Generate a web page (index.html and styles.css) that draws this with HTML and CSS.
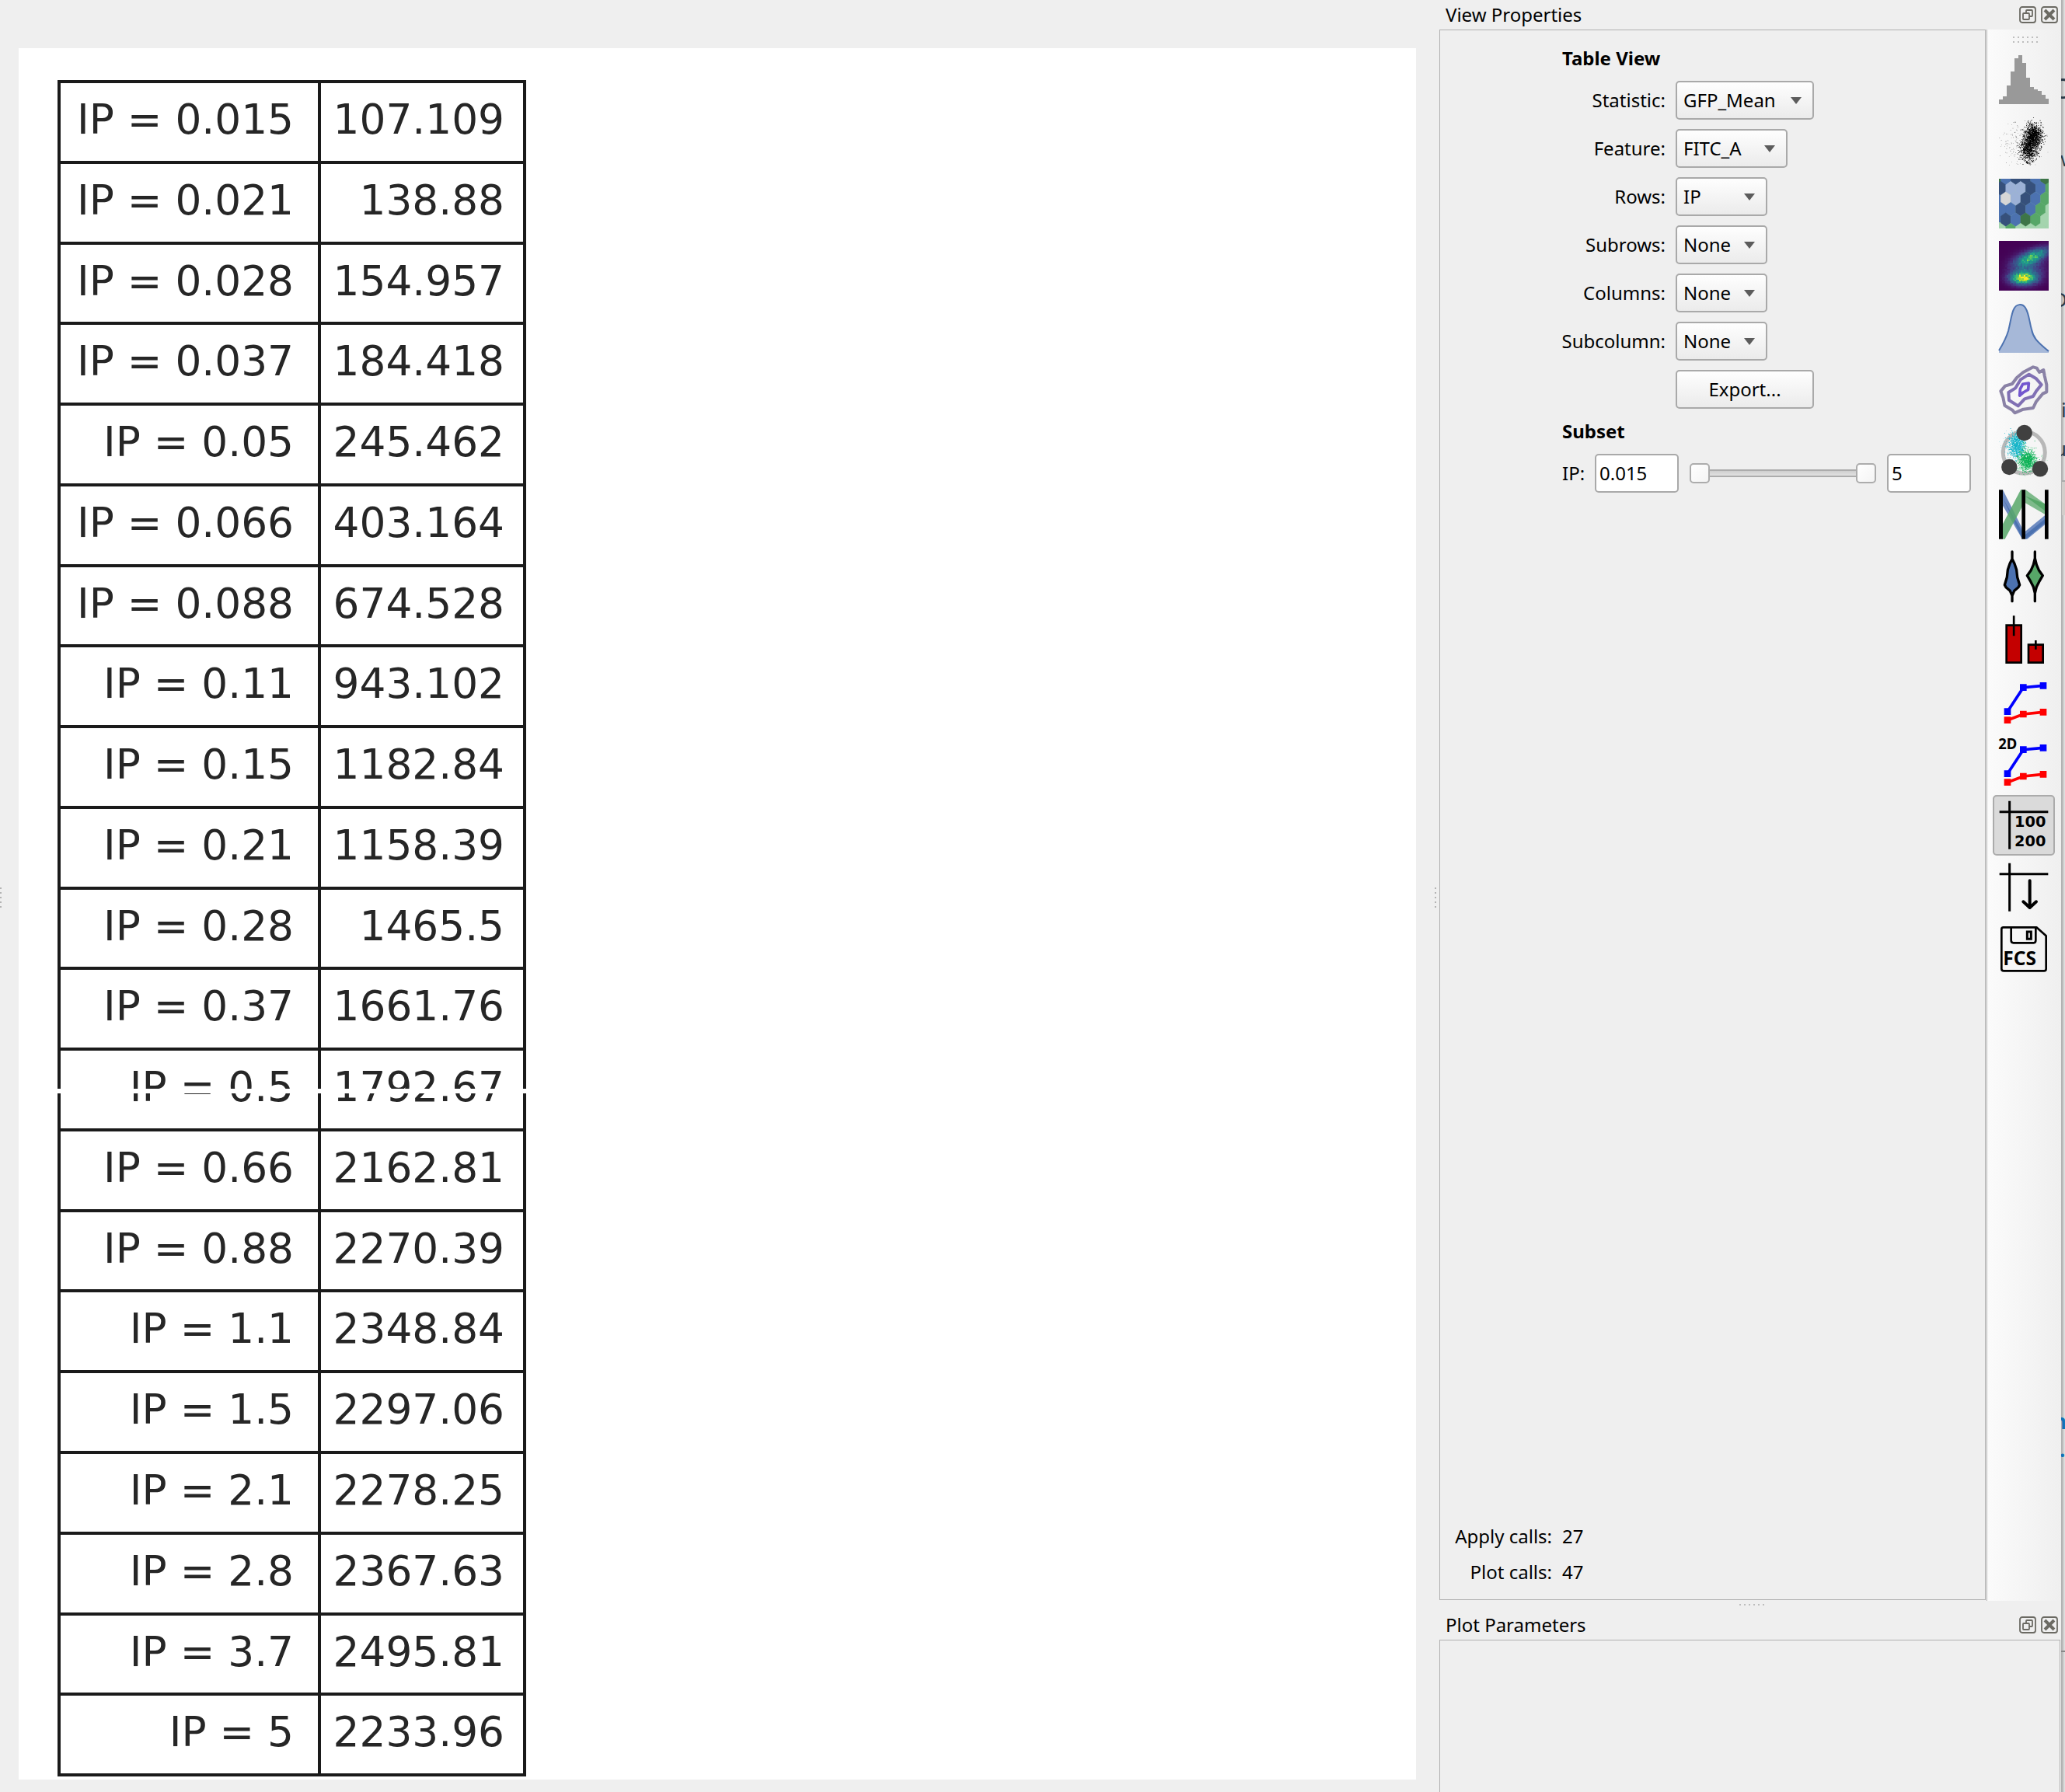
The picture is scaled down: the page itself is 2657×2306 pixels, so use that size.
FILE: index.html
```
<!DOCTYPE html>
<html lang="en">
<head>
  <meta charset="UTF-8">
  <title>Table View</title>
  <link rel="stylesheet" href="styles.css">
</head>
<body>
  <div class="window">
    <main class="plot-area">
      <div class="grip grip-left"></div>
      <div class="canvas">
        <div class="stats" id="stats"></div>
        <div class="seam"></div>
      </div>
      <div class="grip grip-right"></div>
    </main>

    <aside class="docks">
      <div class="dock-title">
        <span>View Properties</span>
        <svg class="dock-buttons" viewBox="0 0 28 22"><use href="#dockButtons"/></svg>
      </div>

      <div class="view-dock">
        <section class="properties">
          <h3>Table View</h3>
          <div class="form">
            <label>Statistic:</label><button class="combo wide">GFP_Mean</button>
            <label>Feature:</label><button class="combo medium">FITC_A</button>
            <label>Rows:</label><button class="combo">IP</button>
            <label>Subrows:</label><button class="combo">None</button>
            <label>Columns:</label><button class="combo">None</button>
            <label>Subcolumn:</label><button class="combo">None</button>
            <span></span><button class="export">Export...</button>
          </div>
          <h3 class="subset">Subset</h3>
          <div class="range">
            <label>IP:</label>
            <input type="text" value="0.015">
            <div class="slider"><i class="handle"></i><i class="groove"></i><i class="handle"></i></div>
            <input type="text" value="5">
          </div>
          <div class="calls">
            <span>Apply calls:</span><span>27</span>
            <span>Plot calls:</span><span>47</span>
          </div>
        </section>

        <nav class="toolbar">
          <div class="dots"></div>
          <!-- histogram -->
          <svg viewBox="0 0 64 64"><path fill="#999" d="M0 64V58H5V54H10V40H15V22H20V5H25V1H30V11H35V30H40V42H45V45H50V47H55V52H60V57H64V64Z"/></svg>
          <!-- scatter -->
          <svg viewBox="0 0 64 64" id="scatter"></svg>
          <!-- hexbin -->
          <svg viewBox="0 0 64 64" id="hexbin"></svg>
          <!-- density -->
          <svg viewBox="0 0 64 64" id="density" shape-rendering="crispEdges"></svg>
          <!-- kde -->
          <svg viewBox="0 0 64 64">
            <path fill="#a6b8d8" d="M0 64V61C5 53 9 46 12 36C15 24 16 14 19 8C22 1 30 0 34 6C39 14 39 24 42 34C44 44 48 49 64 62V64Z"/>
            <path fill="none" stroke="#4c72b0" stroke-width="2" d="M0 61C5 53 9 46 12 36C15 24 16 14 19 8C22 1 30 0 34 6C39 14 39 24 42 34C44 44 48 49 64 62"/>
          </svg>
          <!-- contours -->
          <svg viewBox="96 270 192 192" fill="none" stroke-linejoin="round">
            <path stroke="#8a82a6" stroke-width="12" d="M103 370L120 350L147 342L165 318L190 297L228 277L242 281L252 297L268 288L272 310L280 345V373L265 380L240 410L228 435L190 440L157 454L148 443L118 425L112 395Z"/>
            <path stroke="#8070b4" stroke-width="12" d="M133 375L160 358L180 325L212 305L240 322L260 345L240 370L228 390L195 400L170 427L135 405Z"/>
            <path stroke="#7357cf" stroke-width="11" d="M176 387L178 362L188 343L211 339L209 364L190 375Z"/>
          </svg>
          <!-- radviz -->
          <svg viewBox="0 0 64 64">
            <circle cx="32.3" cy="32.3" r="27" fill="#f6f6f6" stroke="#b8b8b8" stroke-width="5"/>
            <g id="radviz"></g>
            <g fill="#404040"><circle cx="32.7" cy="7" r="10.2"/><circle cx="13.3" cy="51" r="10.2"/><circle cx="53" cy="53.3" r="10.2"/></g>
          </svg>
          <!-- parallel coordinates -->
          <svg viewBox="96 750 192 192">
            <path fill="#6f8cc2" d="M111 751L186 900V941L111 812Z"/>
            <path fill="#4c72b0" d="M111 783L186 912V941L180 928Z"/>
            <path fill="#6f8cc2" d="M197 912L273 850V886L205 941H197Z"/>
            <path fill="#4c72b0" d="M197 925L273 864V880L200 941Z"/>
            <path fill="#57a768" fill-opacity=".85" d="M111 883L180 751H190V808L119 941H111Z"/>
            <path fill="#57a768" fill-opacity=".75" d="M190 751H199L273 805V845L190 797Z"/>
            <path fill="#57a768" d="M197 775L273 805V832Z"/>
            <path d="M96 751h15v190H96zM184 751h14v190h-14zM273 751h14v190h-14z"/>
          </svg>
          <!-- violin -->
          <svg viewBox="96 30 192 192" stroke="#000" stroke-width="10" stroke-linejoin="round">
            <path fill="#4c72b0" d="M147 30V58L138 76L130 100L127 128L118 158L123 167L139 181L147 200V221V200L155 181L171 167L176 158L167 128L164 100L156 76L147 58Z"/>
            <path fill="#57a768" d="M235 30V55L229 80L220 101L205 122L219 146L229 166L235 190V221V190L241 166L251 146L265 122L250 101L241 80L235 55Z"/>
          </svg>
          <!-- bars -->
          <svg viewBox="96 270 192 192" fill="#c40000" stroke="#000" stroke-width="8">
            <path d="M125 314h57v144h-57zM210 389h56v69h-56zM153.500 277v78M238 372v35"/>
          </svg>
          <!-- 1d statistics -->
          <svg viewBox="96 510 192 192"><g id="lines">
            <path fill="none" stroke="#00f" stroke-width="11" d="M129 647L190 554L266 547"/>
            <path fill="none" stroke="#f00" stroke-width="11" d="M129 680L190 657L266 649"/>
            <path fill="#00f" d="M116 634h26v26h-26zM177 541h26v26h-26zM254 534h26v26h-26z"/>
            <path fill="#f00" d="M116 667h26v26h-26zM177 644h26v26h-26zM254 636h26v26h-26z"/>
          </g></svg>
          <!-- 2d statistics -->
          <svg viewBox="96 510 192 192"><use href="#lines"/><text x="94" y="552" font-family="Noto Sans" font-weight="bold" font-size="56" textLength="72" lengthAdjust="spacingAndGlyphs">2D</text></svg>
          <!-- table -->
          <button class="tool selected"><svg viewBox="96 60 192 192">
            <path stroke="#000" stroke-width="9" d="M137 62V248M98 104H286"/>
            <g font-family="DejaVu Sans" font-weight="bold" font-size="58"><text x="156" y="163">100</text><text x="156" y="236">200</text></g>
          </svg></button>
          <!-- export table -->
          <svg viewBox="96 300 192 192">
            <path stroke="#000" stroke-width="9" d="M137 302V488M98 344H286"/>
            <path fill="none" stroke="#000" stroke-width="12" stroke-linecap="round" stroke-linejoin="round" d="M215 370V474M190 451L215 474L240 451"/>
          </svg>
          <!-- export fcs -->
          <svg viewBox="96 540 192 192">
            <path fill="none" stroke="#000" stroke-width="8" stroke-linejoin="round" d="M113 550H241L278 583V710Q278 718 270 718H115Q106 718 106 710V557Q106 550 113 550ZM143 550V600Q143 610 152 610H230Q238 610 238 600V550"/>
            <path fill="none" stroke="#000" stroke-width="9" d="M205 567h15v28h-15z"/>
            <text x="112" y="696" font-family="Noto Sans" font-weight="bold" font-size="73" textLength="128" lengthAdjust="spacingAndGlyphs">FCS</text>
          </svg>
        </nav>
      </div>

      <div class="splitter"><div class="grip-row"></div></div>

      <div class="dock-title">
        <span>Plot Parameters</span>
        <svg class="dock-buttons" viewBox="0 0 28 22"><use href="#dockButtons"/></svg>
      </div>
      <div class="parameters"></div>
    </aside>

    <!-- window behind this one -->
    <div class="behind">
      <div class="edge"></div>
      <b style="top: 98px; left: -12px; font-size: 36px">O</b>
      <b style="top: 188px; left: -10px">w</b>
      <b style="top: 369px; left: -11px">D</b>
      <b style="top: 511px">i</b>
      <b style="top: 561px; left: -9px">u</b>
      <div class="shade"></div>
      <b class="link" style="top: 1813px">n</b>
      <b class="link" style="top: 1849px; left: -2px">.</b>
      <div class="line"></div>
    </div>
  </div>

  <svg class="defs">
    <g id="dockButtons" fill="none" stroke="#6b6a63" stroke-width="1.800">
      <rect x="1" y="1" width="20" height="20" rx="3"/>
      <rect x="5" y="9" width="8" height="8" rx="1"/>
      <path d="M9 9V6Q9 5 10 5H16Q17 5 17 6V12Q17 13 16 13H13"/>
      <g transform="translate(28 0)">
        <rect x="1" y="1" width="20" height="20" rx="3"/>
        <path stroke-width="4" d="M5 5L17 17M17 5L5 17"/>
      </g>
    </g>
  </svg>
  <script src="script.js"></script>
</body>
</html>
```

FILE: styles.css
```
body {
  margin: 0;
  font-family: "Noto Sans", sans-serif;
  font-size: 24px;
  line-height: 32px;
  color: #000;
  background-color: #efefef;
}

.window {
  display: flex;
  width: 2657px;
  height: 2306px;
  overflow: hidden;
}

/* plot */
.plot-area {
  display: flex;
  box-sizing: border-box;
  width: 1852px;
  padding: 62px 0 16px;
}

.canvas {
  position: relative;
  box-sizing: border-box;
  width: 1798px;
  padding: 41px 0 0 50px;
  background: #fff;
}

.grip {
  box-sizing: border-box;
  height: 32px;
  margin-top: 1078px;
  width: 24px;
  background: radial-gradient(circle, #b4b4b4 1px, transparent 1.5px) 0 0 / 6px 6px;
}

.grip-left { width: 3px; margin-right: 21px; background-position: -2px 0; }
.grip-right { width: 6px; margin-left: 22px; }

.stats {
  display: flex;
  flex-direction: column;
  box-sizing: border-box;
  width: 603px;
  height: 2183px;
  border: solid #1a1a1a;
  border-width: 0 4px 4px 0;
  font-family: "DejaVu Sans", sans-serif;
  font-size: 53.3px;
  line-height: 94px;
  color: #262626;
}

.row {
  display: flex;
  flex: 1;
  border-top: 4px solid #1a1a1a;
  text-align: right;
}

.row div {
  box-sizing: border-box;
  border-left: 4px solid #1a1a1a;
}

.name { width: 335px; padding-right: 31px; }
.value { width: 264px; padding-right: 24px; }

.seam {
  position: absolute;
  left: 0;
  right: 0;
  top: 1339px;
  height: 6px;
  background: #fff;
}

/* docks */
.docks {
  width: 800px;
  display: flex;
  flex-direction: column;
}

.dock-title {
  display: flex;
  justify-content: space-between;
  box-sizing: border-box;
  height: 38px;
  padding: 3px 4px 0 8px;
}

.dock-buttons {
  width: 28px;
  height: 22px;
  margin: 5px 22px 0 0;
  overflow: visible;
}

.view-dock {
  display: flex;
  height: 2022px;
}

.properties {
  display: flex;
  flex-direction: column;
  box-sizing: border-box;
  width: 703px;
  height: 2021px;
  padding: 20px 18px 12px 19px;
  border: 1px solid #b0b0b0;
}

h3 {
  margin: 0 0 13px 138px;
  font-size: inherit;
  line-height: 32px;
  font-weight: bold;
}

.form {
  display: grid;
  grid-template-columns: 271px 1fr;
  gap: 12px 13px;
  justify-items: start;
  line-height: 50px;
}

.form label {
  justify-self: end;
}

button, input {
  box-sizing: border-box;
  height: 50px;
  border: 2px solid #a9a9a9;
  border-radius: 5px;
  font: inherit;
  color: #000;
}

.combo, .export {
  width: 118px;
  padding: 0 0 0 8px;
  background: linear-gradient(#fefefe, #ebebeb);
  line-height: 46px;
  text-align: left;
}

.combo {
  display: flex;
  align-items: center;
  justify-content: space-between;
  padding-right: 14px;
}

.combo::after {
  content: "";
  border: solid transparent;
  border-width: 9px 7.5px 0;
  border-top-color: #5c5c5c;
}

.wide, .export { width: 178px; }
.medium { width: 144px; }
.export { padding: 0; text-align: center; }

.subset { margin: 13px 0 13px 138px; }

.range {
  display: flex;
  align-items: center;
  margin-left: 138px;
}

.range label { width: 42px; }

input {
  width: 108px;
  padding: 0 4px 1px;
  background: #fff;
}

.slider {
  display: flex;
  align-items: center;
  width: 240px;
  margin: 0 14px;
}

.handle {
  box-sizing: border-box;
  width: 26px;
  height: 26px;
  border: 2px solid #acacac;
  border-radius: 5px;
  background: linear-gradient(135deg, #fff, #f4f4f4);
}

.groove {
  flex: 1;
  box-sizing: border-box;
  height: 10px;
  border: solid #acacac;
  border-width: 2px 0;
  background: linear-gradient(#cecece, #e2e2e2);
}

.calls {
  display: grid;
  grid-template-columns: 125px auto;
  column-gap: 13px;
  line-height: 46px;
  margin-top: auto;
  justify-content: start;
}

.calls span:nth-child(odd) { text-align: right; }

/* toolbar */
.toolbar {
  display: flex;
  flex-direction: column;
  box-sizing: border-box;
  width: 97px;
  margin-left: 1px;
  padding-left: 15px;
  gap: 16px;
  border-left: 1px solid #b4b4b4;
  background: linear-gradient(to right, #fbfbfb, #efefef);
}

.toolbar svg {
  display: block;
  flex: none;
  width: 64px;
  height: 64px;
  overflow: visible;
}

.dots {
  width: 36px;
  height: 12px;
  margin: 8px 0 -4px 16px;
  background: #bebebe;
  mask: conic-gradient(from 270deg at 2px 2px, #000 90deg, transparent 0) 2px 1px / 6px 6px;
}

.tool.selected {
  width: 80px;
  height: 78px;
  margin: -7px 0 -7px -8px;
  padding: 0 0 0 6px;
  background: #dadada;
  border-color: #ababab;
}

.splitter {
  box-sizing: border-box;
  height: 16px;
  padding: 4px 0 0 386px;
}

.grip-row {
  width: 34px;
  height: 2px;
  background: repeating-linear-gradient(to right, #bdbdbd 0 2px, transparent 2px 6px);
}

.splitter + .dock-title { height: 34px; padding-top: 0; }
.splitter + .dock-title span { margin-top: -1px; }
.splitter + .dock-title .dock-buttons { margin-top: 4px; }

.parameters {
  flex: 1;
  width: 797px;
  border: solid #b0b0b0;
  border-width: 1px 1px 0;
}

/* strip of the window behind */
.behind {
  position: relative;
  width: 5px;
  overflow: hidden;
  background: #e5e5e5;
}

.behind b {
  position: absolute;
  left: 0;
  font-size: 26px;
  font-weight: normal;
  color: #2b3a48;
}

.behind .link { color: #1272b6; left: -10px; font-weight: bold; }

.edge {
  height: 100%;
  background: linear-gradient(to right, #b2b2b2 1px, #bcbcbc 2px, #dedede 4px);
}

.shade {
  position: absolute;
  top: 618px;
  left: 1px;
  width: 4px;
  height: 43px;
  border-top: 2px solid #aaa;
  background: #d2cecb;
}

.line {
  position: absolute;
  top: 2124px;
  width: 5px;
  height: 2px;
  background: #888;
}

.defs { display: none; }
```

FILE: script.js
```
const rows = [
  ["0.015", "107.109"], ["0.021", "138.88"], ["0.028", "154.957"], ["0.037", "184.418"],
  ["0.05", "245.462"], ["0.066", "403.164"], ["0.088", "674.528"], ["0.11", "943.102"],
  ["0.15", "1182.84"], ["0.21", "1158.39"], ["0.28", "1465.5"], ["0.37", "1661.76"],
  ["0.5", "1792.67"], ["0.66", "2162.81"], ["0.88", "2270.39"], ["1.1", "2348.84"],
  ["1.5", "2297.06"], ["2.1", "2278.25"], ["2.8", "2367.63"], ["3.7", "2495.81"], ["5", "2233.96"]
];

document.getElementById("stats").innerHTML = rows.map(([ip, mean]) =>
  `<div class="row"><div class="name">IP = ${ip}</div><div class="value">${mean}</div></div>`).join("");

// seeded so the icons look the same on every load
let seed = 7;
function random() {
  seed = (seed * 16807) % 2147483647;
  return seed / 2147483647;
}

function normal() {
  return Math.sqrt(-2 * Math.log(random())) * Math.cos(2 * Math.PI * random());
}

function cloud(n, cx, cy, sx, sy, size) {
  let d = "";
  for (let i = 0; i < n; i++) {
    const x = cx + normal() * sx;
    const y = cy + normal() * sy;
    if (x < 0 || x > 63 || y < 0 || y > 63) continue;
    d += `M${x.toFixed(1)} ${y.toFixed(1)}h${size}v${size}h-${size}z`;
  }
  return d;
}

document.getElementById("scatter").innerHTML =
  `<path d="${cloud(1100, 44, 25, 5.5, 7.5, 0.9)}${cloud(700, 38, 42, 5.5, 8, 0.9)}"/>` +
  `<path fill="#555" d="${cloud(260, 30, 34, 14, 13, 0.6)}"/>`;

document.getElementById("radviz").innerHTML =
  `<path fill="#12b4c8" d="${cloud(800, 22, 22, 5, 8, 0.9)}${cloud(120, 18, 24, 9, 11, 0.5)}"/>` +
  `<path fill="#0cb255" d="${cloud(850, 36, 42, 5.5, 6.5, 0.9)}${cloud(100, 38, 45, 10, 9, 0.5)}"/>`;

// hexbin, one letter per cell, odd rows shifted by half a cell
const hexColors = {
  B: "#4c72b0", D: "#36507b", L: "#9cb1d6", W: "#d6d6d6", G: "#57a768", K: "#3d7548", P: "#a4d4ae"
};
const hexRows = ["KBDDBK", "DLLDBG", "WLDBG", "BBDBGP", "DBKGP", "PGPPPP"];
const hexStart = [-4.1, 2.3, 8.7, 2.3, 8.7, 2.3];
let hexes = "";
hexRows.forEach((row, r) => {
  const y = -1.1 + r * 13.45;
  [...row].forEach((key, c) => {
    const x = hexStart[r] + c * 12.8;
    hexes += `<path fill="${hexColors[key]}" stroke="${hexColors[key]}" stroke-width=".3" d="M${x} ${y - 9}l6.400 4.500v9l-6.400 4.500l-6.400-4.500v-9z"/>`;
  });
});
document.getElementById("hexbin").innerHTML =
  `<clipPath id="hexClip"><rect width="64" height="64"/></clipPath><g clip-path="url(#hexClip)">` +
  `<rect width="64" height="64" fill="#a4d4ae"/><rect width="10" height="56" fill="#4c72b0"/>${hexes}</g>`;

// density
const viridis = [[68, 1, 84], [72, 40, 120], [62, 74, 137], [49, 104, 142], [38, 130, 142], [31, 158, 137], [53, 183, 121], [109, 205, 89], [180, 222, 44], [253, 231, 37]];
function blob(x, y, cx, cy, sx, sy, slope) {
  const dx = x - cx;
  const dy = y - cy + slope * dx;
  return Math.exp(-(dx * dx / (2 * sx * sx) + dy * dy / (2 * sy * sy)));
}
let cells = "";
for (let y = 0; y < 64; y += 2) {
  for (let x = 0; x < 64; x += 2) {
    let v = 0.88 * blob(x, y, 30, 47, 11, 5.5, 0) + 0.56 * blob(x, y, 43, 19, 14, 6, 0.35) + 0.26 * blob(x, y, 36, 34, 14, 11, 0);
    v = Math.max(0, Math.min(0.999, v * (1 + normal() * 0.12)));
    const t = v * 9;
    const i = Math.floor(t);
    const rgb = viridis[i].map((c, k) => Math.round(c + (viridis[i + 1][k] - c) * (t - i)));
    cells += `<rect x="${x}" y="${y}" width="2" height="2" fill="rgb(${rgb})"/>`;
  }
}
document.getElementById("density").innerHTML = cells;
```
